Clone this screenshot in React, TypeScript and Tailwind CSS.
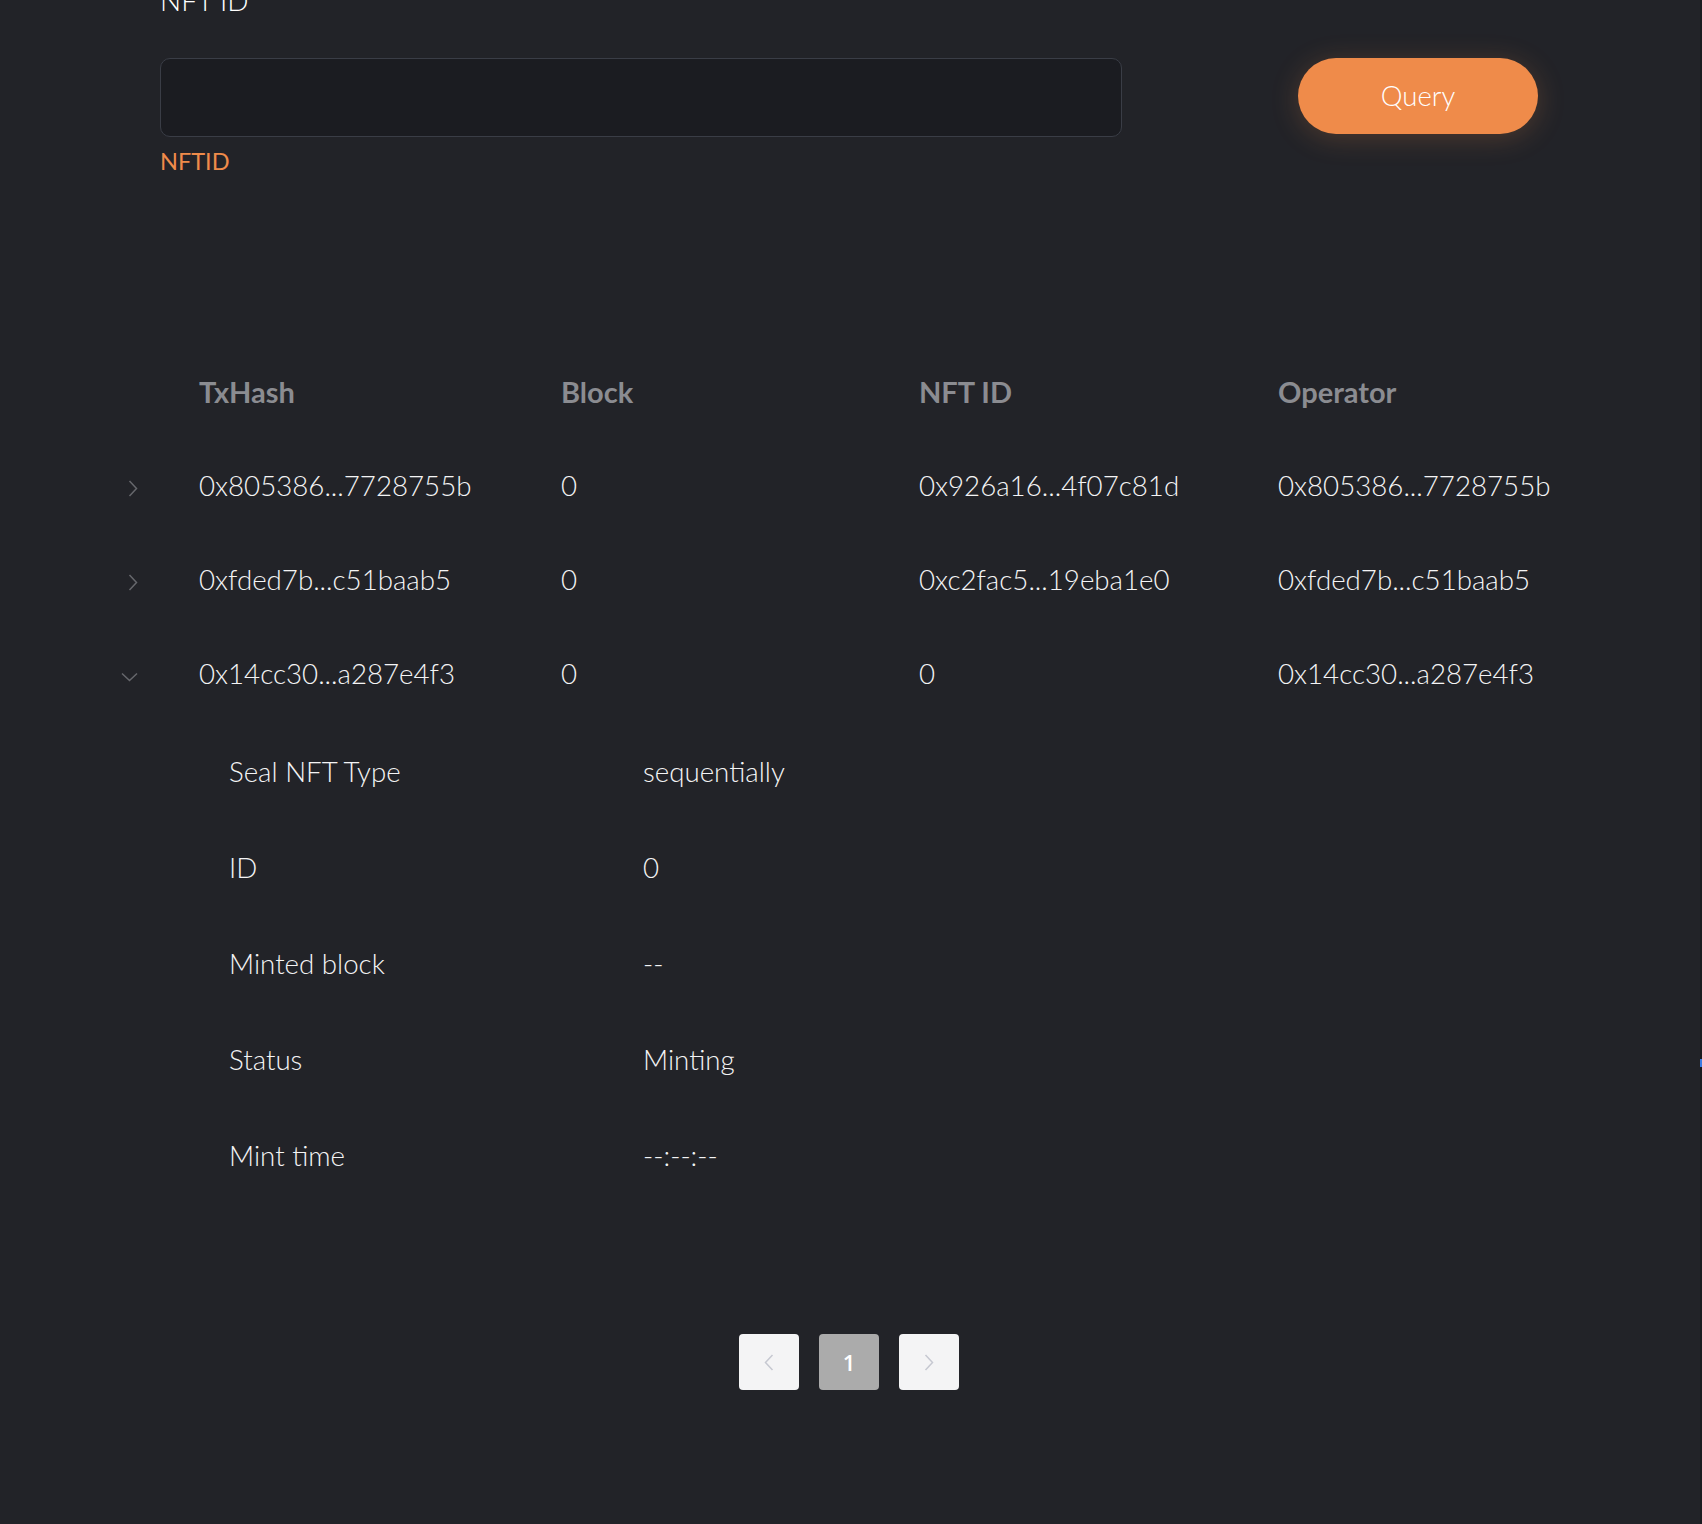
import React from 'react';

const rows = [
  { hash: '0x805386...7728755b', block: '0', nft: '0x926a16...4f07c81d', operator: '0x805386...7728755b', open: false },
  { hash: '0xfded7b...c51baab5', block: '0', nft: '0xc2fac5...19eba1e0', operator: '0xfded7b...c51baab5', open: false },
  { hash: '0x14cc30...a287e4f3', block: '0', nft: '0', operator: '0x14cc30...a287e4f3', open: true },
];

const details = [
  { label: 'Seal NFT Type', value: 'sequentially' },
  { label: 'ID', value: '0' },
  { label: 'Minted block', value: '--' },
  { label: 'Status', value: 'Minting' },
  { label: 'Mint time', value: '--:--:--' },
];

function ChevronRight({ color, className }: { color: string; className?: string }) {
  return (
    <svg width="10" height="17" viewBox="0 0 10 17" fill="none" className={className}>
      <polyline points="1.5,1 8.5,8.5 1.5,16" stroke={color} strokeWidth="1.5" strokeLinejoin="miter" />
    </svg>
  );
}

function ChevronLeft({ color }: { color: string }) {
  return (
    <svg width="10" height="17" viewBox="0 0 10 17" fill="none">
      <polyline points="8.5,1 1.5,8.5 8.5,16" stroke={color} strokeWidth="1.5" />
    </svg>
  );
}

function ChevronDown({ color, className }: { color: string; className?: string }) {
  return (
    <svg width="17" height="10" viewBox="0 0 17 10" fill="none" className={className}>
      <polyline points="1,1.5 8.5,8.5 16,1.5" stroke={color} strokeWidth="1.5" />
    </svg>
  );
}

export default function App() {
  return (
    <div className="flex min-h-[1524px] w-full overflow-hidden bg-[#222328] font-['Lato',_'Open_Sans',_sans-serif] font-light text-white">
      <div className="flex-1">
        {/* query form */}
        <div className="pl-[160px]">
          <div className="-mt-[14px] h-[28px] text-[28px] leading-none text-white">NFT ID</div>
          <div className="mt-[44px] flex items-start">
            <input
              className="h-[79px] w-[962px] rounded-[10px] border-[1.5px] border-[#3a3d46] bg-[#1b1c21] px-5 text-[24px] text-white outline-none"
              type="text"
            />
            <button className="ml-[176px] h-[76px] w-[240px] rounded-full bg-[#ef8b4a] text-[27.5px] font-light text-white shadow-[0_4px_28px_rgba(239,139,74,0.22)]">
              Query
            </button>
          </div>
          <div className="mt-[13px] h-[23px] text-[23.5px] font-normal leading-none text-[#ef8b4a]">NFTID</div>
        </div>

        {/* table */}
        <div className="mt-[172px] text-[27.7px]">
          <div className="flex h-[94px] items-center text-[29px] font-bold text-[#8b8c91]">
            <div className="w-[199px]" />
            <div className="w-[362px]">TxHash</div>
            <div className="w-[358px]">Block</div>
            <div className="w-[359px]">NFT ID</div>
            <div className="flex-1">Operator</div>
          </div>

          {rows.map((r) => (
            <div key={r.hash}>
              <div className="flex h-[94px] items-center text-[#f4f4f5]">
                <div className="flex w-[199px] items-center">
                  {r.open ? (
                    <ChevronDown color="#66676c" className="ml-[121px] mt-[6px]" />
                  ) : (
                    <ChevronRight color="#66676c" className="ml-[128px] mt-[5px]" />
                  )}
                </div>
                <div className="w-[362px]">{r.hash}</div>
                <div className="w-[358px]">{r.block}</div>
                <div className="w-[359px]">{r.nft}</div>
                <div className="flex-1">{r.operator}</div>
              </div>

              {r.open && (
                <div className="pt-[3px]">
                  {details.map((d) => (
                    <div key={d.label} className="flex h-[96px] items-center pl-[229px] text-[#f4f4f5]">
                      <div className="w-[414px]">{d.label}</div>
                      <div>{d.value}</div>
                    </div>
                  ))}
                </div>
              )}
            </div>
          ))}
        </div>

        {/* pagination */}
        <div className="mt-[130px] flex justify-center gap-5 pr-[2px]">
          <button className="flex h-[56px] w-[60px] items-center justify-center rounded-[4px] bg-[#f4f4f5]">
            <ChevronLeft color="#c6c8d1" />
          </button>
          <button className="flex h-[56px] w-[60px] items-center justify-center rounded-[4px] bg-[#ababab] font-['Open_Sans',_sans-serif] text-[22px] font-semibold text-white">
            1
          </button>
          <button className="flex h-[56px] w-[60px] items-center justify-center rounded-[4px] bg-[#f4f4f5]">
            <ChevronRight color="#c6c8d1" />
          </button>
        </div>
      </div>

      {/* right edge strip */}
      <div className="relative w-[2px] bg-[#1a1b1f]">
        <div className="absolute top-[1059px] left-0 h-[8px] w-[2px] bg-[#3b7ae0]" />
      </div>
    </div>
  );
}
